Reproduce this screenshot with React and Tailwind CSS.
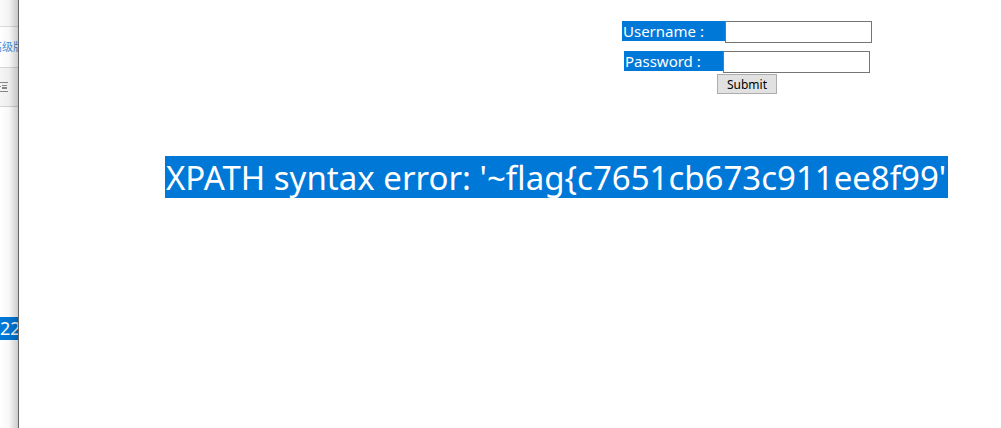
function Sidebar() {
  return (
    <aside className="relative flex w-[19px] shrink-0 flex-col overflow-hidden border-r border-[#666] bg-white font-['Noto_Sans','Noto_Sans_CJK_SC',sans-serif]">
      <div className="h-[27px] border-b border-[#dcdcdc] bg-[#fafafa]" />
      <div className="flex h-[41px] items-center justify-end border-b border-[#d8d8d8]">
        <a href="#advanced" className="-mr-1.5 whitespace-nowrap text-[11px] leading-4 text-[#4a90d9]">高级版</a>
      </div>
      <div className="flex h-[39px] items-center border-b border-[#d4d4d4] bg-[#f5f5f5]">
        <svg width="8" height="10" viewBox="0 0 8 10" fill="none" stroke="#888" aria-hidden="true">
          <path d="M0 .5h8M2 3.5h5M2 5.5h5M2 6.5h5M0 9.5h8" />
          <path d="M0 4.5h1" />
        </svg>
      </div>
      <div className="mt-[210px] h-[23px] bg-[#0078d7] text-[18px] leading-[23px] text-white">22</div>
      <div className="pointer-events-none absolute inset-0 bg-linear-to-r from-black/0 via-black/3 to-black/20" />
    </aside>
  );
}

function Field({ id, label, type, labelWidth }) {
  return (
    <div className="flex items-start">
      <label htmlFor={id} className={`${labelWidth} h-5 bg-[#0078d7] pl-px text-[15px] leading-5 whitespace-nowrap text-white`}>
        {label}
      </label>
      <input id={id} type={type} className="h-[22px] w-[147px] border border-[#767676] bg-white px-1 text-[13px] outline-none" />
    </div>
  );
}

export default function App() {
  return (
    <div className="flex min-h-screen bg-white font-['Noto_Sans',sans-serif]">
      <Sidebar />
      <main className="min-w-0 flex-1 pt-[21px]">
        <form className="ml-[474px] flex flex-col items-center" onSubmit={(e) => e.preventDefault()}>
          <div className="flex flex-col items-center gap-2">
            <Field id="username" label="Username :" type="text" labelWidth="w-[103px]" />
            <Field id="password" label="Password :" type="password" labelWidth="w-[99px]" />
          </div>
          <button type="submit" className="mt-px h-5 w-[60px] border border-[#adadad] bg-[#e1e1e1] text-[12px] leading-5 text-black">
            Submit
          </button>
        </form>
        <p className="mt-[62px] ml-[146px] h-[42px] w-fit bg-[#0078d7] pr-[2px] pl-px text-[33px] leading-[44px] whitespace-nowrap text-white">
          XPATH syntax error: '~flag{'{'}c7651cb673c911ee8f99'
        </p>
      </main>
    </div>
  );
}
